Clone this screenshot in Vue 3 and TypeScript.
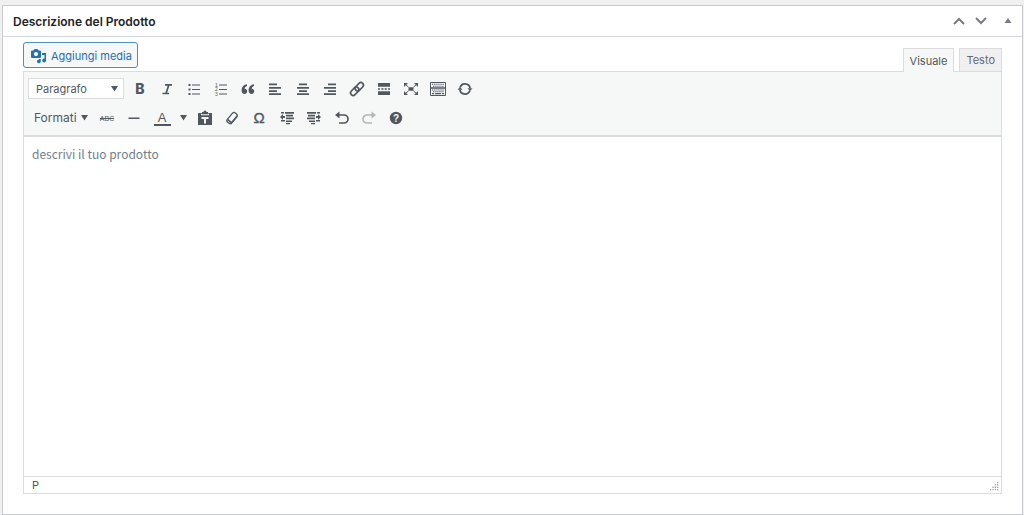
<script setup lang="ts">
import { ref } from 'vue'

interface Tool {
  label: string
  art: string
  faded?: boolean
}

const block = ref('Paragrafo')
const content = ref('')
const mode = ref('Visuale')

const firstRow: Tool[] = [
  { label: 'Grassetto', art: '<text x="9" y="14" font-size="14" font-weight="800" text-anchor="middle" font-family="Inter, sans-serif">B</text>' },
  { label: 'Corsivo', art: '<path d="M7 4.900h7M4.500 13.500h6.500M10.800 4.900L8 13.500" fill="none" stroke="currentColor" stroke-width="1.700"/>' },
  { label: 'Elenco puntato', art: '<path d="M3.500 4h2v2h-2zM3.500 8.500h2v2h-2zM3.500 13h2v2h-2z"/><path d="M7 5h8M7 9.500h8M7 14h8" stroke="currentColor" stroke-width="1"/>' },
  { label: 'Elenco numerato', art: '<path d="M7 5h8M7 9.500h8M7 14h8" stroke="currentColor" stroke-width="1"/><g font-size="5" font-family="Liberation Sans, sans-serif"><text x="3" y="6.500">1</text><text x="3" y="11">2</text><text x="3" y="15.500">3</text></g>' },
  { label: 'Citazione', art: '<path d="M8 4.200C5 4.500 2.600 6.800 2.600 10.500c0 2.200 1.200 3.500 2.900 3.500 1.500 0 2.700-1.100 2.700-2.700 0-1.500-1-2.500-2.500-2.600.1-1.300.9-2.200 2.300-2.700zM15 4.200C12 4.500 9.600 6.800 9.600 10.500c0 2.200 1.200 3.500 2.900 3.500 1.500 0 2.700-1.100 2.700-2.700 0-1.500-1-2.500-2.500-2.600.1-1.300.9-2.200 2.300-2.700z"/>' },
  { label: 'Allinea a sinistra', art: '<path d="M3 3.500h8v1.700H3zM3 7h12v1.700H3zM3 10.200h8v1.700H3zM3 13.300h12V15H3z"/>' },
  { label: 'Allinea al centro', art: '<path d="M5 3.500h8v1.700H5zM3 7h12v1.700H3zM5 10.200h8v1.700H5zM3 13.300h12V15H3z"/>' },
  { label: 'Allinea a destra', art: '<path d="M7 3.500h8v1.700H7zM3 7h12v1.700H3zM7 10.200h8v1.700H7zM3 13.300h12V15H3z"/>' },
  { label: 'Inserisci link', art: '<g transform="rotate(-45 9 9)" fill="none" stroke="currentColor" stroke-width="1.600"><rect x="1" y="6.400" width="9.600" height="5.200" rx="2.600"/><rect x="7.400" y="6.400" width="9.600" height="5.200" rx="2.600"/></g>' },
  { label: 'Inserisci tag Leggi tutto', art: '<path d="M3 3h12v3.700H3zM3 11.300h12V15H3zM3 8.300h2v1.400H3zM6.300 8.300h2.200v1.400H6.300zM9.600 8.300h2.200v1.400H9.600zM13 8.300h2v1.400h-2z"/>' },
  { label: 'Schermo intero', art: '<path d="M6.500 7.200h5v3.600h-5zM2 3h4L2 7zM16 3h-4l4 4zM2 15h4l-4-4zM16 15h-4l4-4z"/><path d="M3 4l3.500 3M15 4l-3.500 3M3 14l3.500-3M15 14l-3.500-3" stroke="currentColor" stroke-width="1"/>' },
  { label: 'Mostra barra strumenti', art: '<g fill="none" stroke="currentColor"><path d="M1.500 2.500h15v5.500h-15zM1.500 8h15v7.500h-15z"/><path d="M3 4.300h12M4 6.200h11" stroke-width="1.100" stroke-dasharray="1.300 .8"/><path d="M3 10h12M4 11.800h11" stroke-width="1.100" stroke-dasharray="1.300 .8"/><path d="M3 13.700h2m1 0h6m1 0h2" stroke-width="1.200"/></g>' },
  { label: 'Aggiorna', art: '<g fill="none" stroke="currentColor" stroke-width="1.800"><path d="M4.100 7.500A5.200 5.200 0 0 1 14.100 8M13.900 10.500A5.200 5.200 0 0 1 3.900 10"/></g><path d="M11.500 8.300h5l-2.500 2.800zM1.500 9.700h5L4 6.900z"/>' },
]

const styleTools: Tool[] = [
  { label: 'Barrato', art: '<text x="9" y="12" font-size="7" text-anchor="middle" font-family="Liberation Sans, sans-serif">ABC</text><path d="M2 9.500h14" stroke="currentColor"/>' },
  { label: 'Linea orizzontale', art: '<path d="M3.500 8.500h11V10h-11z"/>' },
]

const secondRow: Tool[] = [
  { label: 'Incolla come testo', art: '<path fill-rule="evenodd" d="M2.500 4H6V3h1.500Q7.500 1.500 9 1.500T10.500 3H12v1h3.500q.5 0 .5.5v11q0 .5-.5.500h-13q-.5 0-.5-.5v-11q0-.5.500-.500zM5 4.700v1.600h8V4.700h-1v.5H6v-.5zM5.500 8h7v2H10v4.500H8V10H5.500z"/>' },
  { label: 'Cancella formattazione', art: '<g transform="rotate(-50 9 9)" fill="none" stroke="currentColor" stroke-width="1.300"><rect x="3" y="6.300" width="12" height="5.500" rx="2"/><path d="M5 6.800v4.700M3.500 11.800h10" stroke-width="1.600"/></g>' },
  { label: 'Carattere speciale', art: '<text x="9" y="14" font-size="15" text-anchor="middle" stroke="currentColor" stroke-width=".4" font-family="Liberation Sans, sans-serif">Ω</text>' },
  { label: 'Riduci rientro', art: '<path d="M3 3h3v1.500H3zM7 3h9v1.700H7zM8 5.800h7v1.700H8zM8 8.600h8v1.700H8zM8 11.400h6v1.700H8zM3 11h4v1.500H3zM2 8l3-3v2h2v2H5v2zM8 14h4v1.300H8z"/>' },
  { label: 'Aumenta rientro', art: '<path d="M2 3h9v1.700H2zM12 3h3v1.500h-3zM3 5.800h7v1.700H3zM2 8.600h8v1.700H2zM4 11.400h6v1.700H4zM11 11h4v1.500h-4zM16 8l-3-3v2h-2v2h2v2zM6 14h4v1.300H6z"/>' },
  { label: 'Annulla', art: '<path d="M5 6h6a4 4 0 0 1 0 8H6" fill="none" stroke="currentColor" stroke-width="1.700"/><path d="M2 6l4.500-3.500v7z"/>' },
  { label: 'Ripristina', faded: true, art: '<path d="M13 6H7a4 4 0 0 0 0 8h5" fill="none" stroke="currentColor" stroke-width="1.700"/><path d="M16 6l-4.500-3.500v7z"/>' },
  { label: 'Scorciatoie da tastiera', art: '<circle cx="9" cy="9" r="6.200"/><text x="9" y="12.500" fill="#f6f7f7" font-size="10" font-weight="700" text-anchor="middle" font-family="Liberation Sans, sans-serif">?</text>' },
]
</script>

<template>
  <main class="page">
    <section class="postbox">
      <header class="head">
        <h2>Descrizione del Prodotto</h2>
        <div class="order">
          <button type="button" aria-label="Sposta su"><svg viewBox="0 0 14 14"><path d="M2 10l5-5 5 5" fill="none" stroke="currentColor" stroke-width="2" /></svg></button>
          <button type="button" aria-label="Sposta giù"><svg viewBox="0 0 14 14"><path d="M2 4l5 5 5-5" fill="none" stroke="currentColor" stroke-width="2" /></svg></button>
          <button type="button" class="toggle" aria-label="Riduci pannello"><svg viewBox="0 0 14 14"><path d="M7 4l3.500 5h-7z" /></svg></button>
        </div>
      </header>

      <div class="inside">
        <div class="top">
          <button type="button" class="media">
            <svg viewBox="0 0 16 16">
              <path fill-rule="evenodd" d="M1 2.500h1.500l1-1.500h3l1 1.500H9q1 0 1 1V9q0 1-1 1H1Q0 10 0 9V3.500q0-1 1-1zM5 4a2.100 2.100 0 1 0 0 4.200A2.100 2.100 0 0 0 5 4z" />
              <path d="M11 5h4v7.500a1.900 1.900 0 1 1-1.500-1.800V7H11z" />
              <path d="M9.800 11v2.300a1.900 1.900 0 1 1-1.600-1.800V11z" />
            </svg>
            Aggiungi media
          </button>
          <div class="tabs">
            <button v-for="tab in ['Visuale', 'Testo']" :key="tab" type="button" :class="{ active: mode === tab }" @click="mode = tab">{{ tab }}</button>
          </div>
        </div>

        <div class="editor">
          <div class="toolbar">
            <div class="row">
              <div class="picker">
                <select v-model="block" aria-label="Formato del blocco">
                  <option>Paragrafo</option>
                  <option>Titolo 1</option>
                  <option>Titolo 2</option>
                </select>
                <svg class="caret" viewBox="0 0 8 8"><path d="M0 1h8L4 7.500z" /></svg>
              </div>
              <div class="tools first">
                <button v-for="tool in firstRow" :key="tool.label" type="button" :aria-label="tool.label">
                  <svg viewBox="0 0 18 18" v-html="tool.art"></svg>
                </button>
              </div>
            </div>
            <div class="row">
              <button type="button" class="formats">Formati <svg class="caret" viewBox="0 0 8 8"><path d="M0 1h8L4 7.500z" /></svg></button>
              <div class="tools styles">
                <button v-for="tool in styleTools" :key="tool.label" type="button" :aria-label="tool.label">
                  <svg viewBox="0 0 18 18" v-html="tool.art"></svg>
                </button>
              </div>
              <button type="button" class="color" aria-label="Colore testo"><span>A</span></button>
              <button type="button" class="swatch" aria-label="Scegli colore"><svg class="caret" viewBox="0 0 8 8"><path d="M0 1h8L4 7.500z" /></svg></button>
              <div class="tools second">
                <button v-for="tool in secondRow" :key="tool.label" type="button" :class="{ faded: tool.faded }" :aria-label="tool.label">
                  <svg viewBox="0 0 18 18" v-html="tool.art"></svg>
                </button>
              </div>
            </div>
          </div>
          <textarea v-model="content" aria-label="Descrizione del Prodotto" placeholder="descrivi il tuo prodotto"></textarea>
          <footer class="status">
            <span>P</span>
            <svg viewBox="0 0 9 9"><path d="M7 0h1.300v1.300H7zM7 2.300h1.300v1.300H7zM4.700 2.300H6v1.300H4.700zM7 4.600h1.300v1.300H7zM4.700 4.600H6v1.300H4.700zM2.400 4.600h1.300v1.300H2.400zM7 7h1.300v1.300H7zM4.700 7H6v1.300H4.700zM2.400 7h1.300v1.300H2.400zM0 7h1.300v1.300H0z" /></svg>
          </footer>
        </div>
      </div>
    </section>
  </main>
</template>

<style>
body {
  margin: 0;
  background: #f0f0f1;
}
</style>

<style scoped>
* {
  box-sizing: border-box;
}
.page {
  display: flex;
  min-height: 100vh;
  padding: 5px 1px 0 2px;
  font: 11px/16px Inter, "Liberation Sans", sans-serif;
  color: #50575e;
}
button {
  margin: 0;
  padding: 0;
  border: 0;
  background: none;
  font: inherit;
  color: inherit;
  cursor: pointer;
}
svg {
  display: block;
  fill: currentColor;
}
.postbox {
  display: flex;
  flex: 1;
  flex-direction: column;
  background: #fff;
  border: 1px solid #c9cbce;
}
.head {
  display: flex;
  align-items: center;
  justify-content: space-between;
  height: 31px;
  padding: 0 7px 0 10px;
  border-bottom: 1px solid #d5d6d9;
}
h2 {
  margin: 0;
  padding-top: 1px;
  font-size: 12px;
  font-weight: 600;
  color: #1d2327;
}
.order {
  display: flex;
  align-items: center;
  gap: 8px;
  color: #787c82;
}
.order svg {
  width: 14px;
  height: 14px;
}
.order .toggle {
  margin-left: 5px;
}
.inside {
  display: flex;
  flex: 1;
  flex-direction: column;
  padding: 5px 20px 20px;
}
.top {
  display: flex;
  align-items: flex-start;
  justify-content: space-between;
  height: 29px;
}
.media {
  display: flex;
  align-items: center;
  gap: 4px;
  height: 26px;
  padding: 1px 5px 0 7px;
  border: 1px solid #4f8ec1;
  border-radius: 3px;
  background: #f6f7f7;
  color: #2271b1;
}
.media svg {
  width: 16px;
  height: 16px;
}
.tabs {
  display: flex;
  align-self: flex-end;
  gap: 5px;
}
.tabs button {
  height: 23px;
  padding: 0 6px;
  border: 1px solid #dcdcde;
  border-bottom: 0;
  background: #f0f0f1;
  color: #646970;
}
.tabs .active {
  position: relative;
  height: 24px;
  margin-bottom: -1px;
  background: #f6f7f7;
  color: #50575e;
}
.editor {
  display: flex;
  flex: 1;
  flex-direction: column;
  border: 1px solid #dcdcde;
}
.toolbar {
  padding: 2px 4px 3px;
  border-bottom: 2px solid #dcdcde;
  background: #f6f7f7;
}
.row {
  display: flex;
  align-items: center;
  height: 29px;
}
.picker {
  display: grid;
  align-items: center;
  width: 96px;
  margin-right: 2px;
}
.picker > * {
  grid-area: 1 / 1;
}
select {
  height: 21px;
  padding: 0 7px;
  border: 1px solid #dcdcde;
  border-radius: 0;
  appearance: none;
  background: #fff;
  color: #50575e;
  font: inherit;
}
.caret {
  width: 7px;
  height: 7px;
}
.picker .caret {
  justify-self: end;
  margin-right: 6px;
  pointer-events: none;
}
.tools {
  display: flex;
  color: #50575e;
}
.tools button {
  display: flex;
  flex: 1;
  justify-content: center;
}
.tools svg {
  width: 18px;
  height: 18px;
}
.first {
  width: 353px;
}
.formats {
  display: flex;
  align-items: center;
  gap: 4px;
  width: 65px;
  padding-left: 6px;
  font-size: 12px;
}
.styles {
  width: 55px;
}
.color {
  width: 28px;
}
.color span {
  display: block;
  width: 17px;
  height: 16px;
  margin: 1px auto 0;
  border-bottom: 2px solid #50575e;
  font: 13px/15px "Liberation Sans", sans-serif;
}
.swatch {
  display: flex;
  justify-content: center;
  width: 15px;
}
.second {
  width: 219px;
}
.faded {
  opacity: 0.4;
}
textarea {
  flex: 1;
  width: 100%;
  padding: 8px;
  border: 0;
  outline: 0;
  resize: none;
  background: #fff;
  color: #3c434a;
  font: 12px/18px "Noto Sans CJK SC", "Noto Sans", sans-serif;
}
textarea::placeholder {
  color: #72808a;
  opacity: 1;
}
.status {
  display: flex;
  align-items: center;
  justify-content: space-between;
  height: 17px;
  padding: 0 2px 0 8px;
  border-top: 1px solid #dcdcde;
}
.status svg {
  width: 9px;
  height: 9px;
  align-self: flex-end;
  margin-bottom: 2px;
  color: #a0a3a7;
}
</style>
